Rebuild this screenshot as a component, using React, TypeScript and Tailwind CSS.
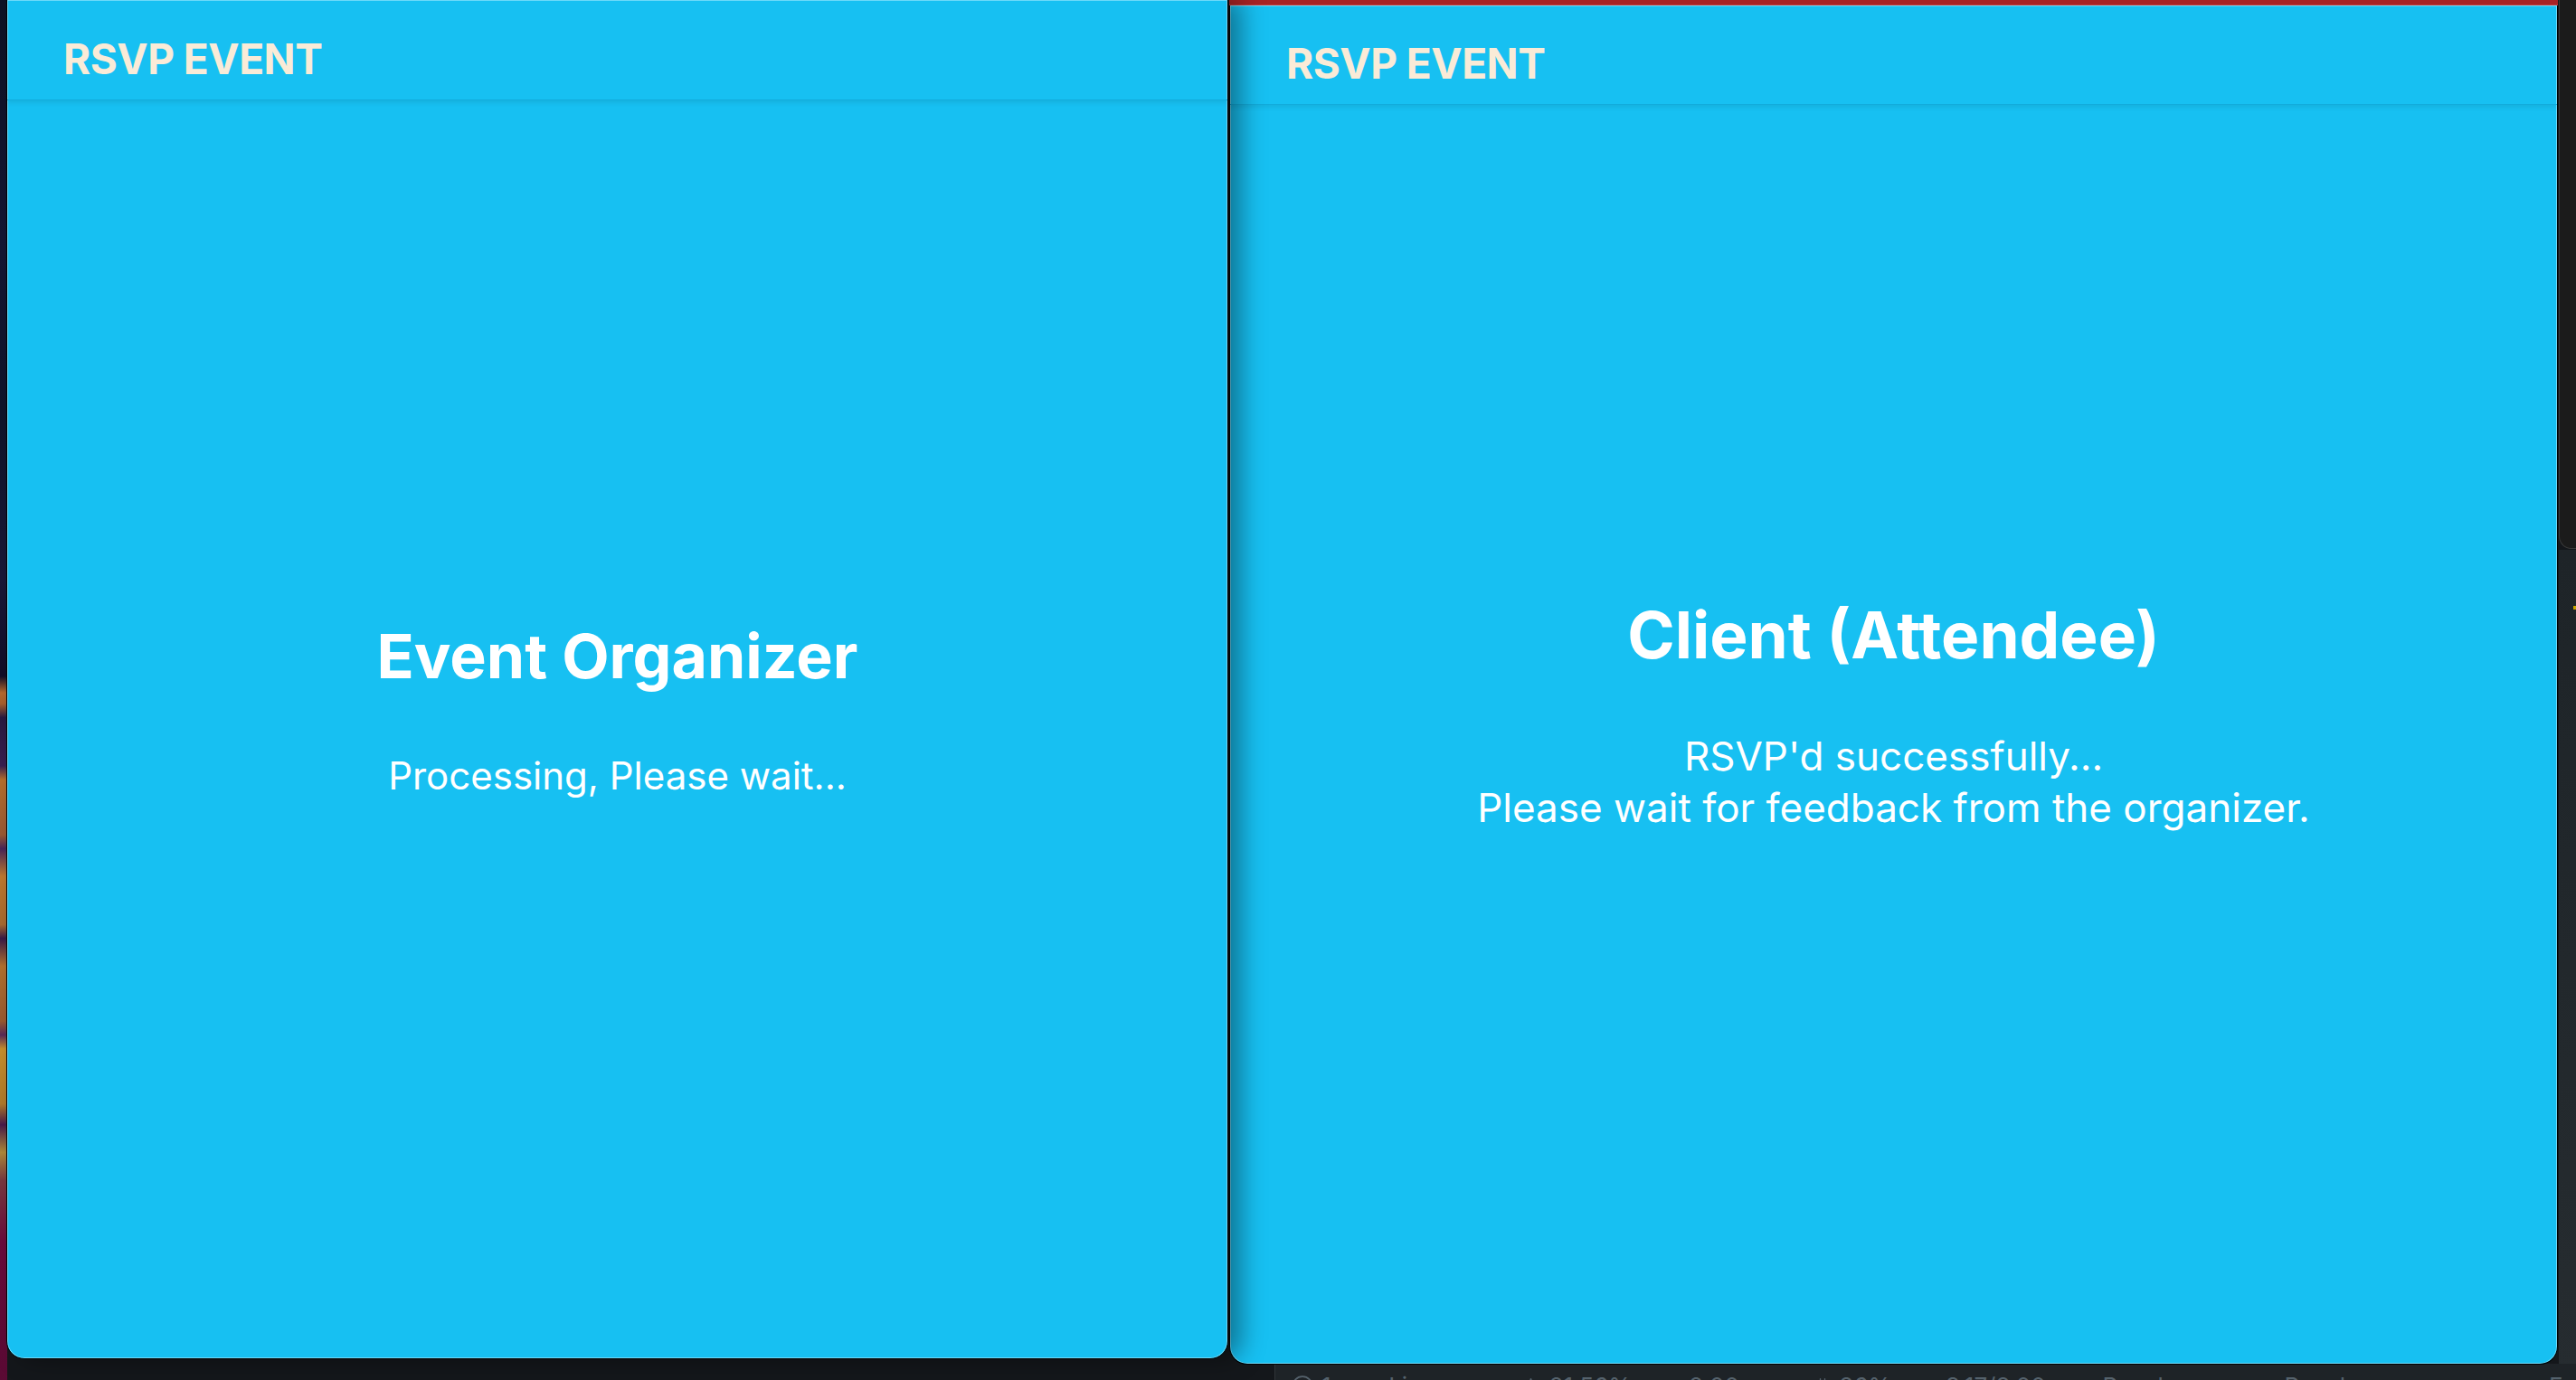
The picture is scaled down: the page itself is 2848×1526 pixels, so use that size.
import { Info, Forward, Activity, Gauge, Plug } from "lucide-react";

const font = { fontFamily: "Inter, 'Noto Sans', sans-serif" };

type WindowProps = {
  heading: string;
  lines: string[];
  headerClass: string;
  headingClass: string;
  textClass: string;
};

const RsvpWindow = ({ heading, lines, headerClass, headingClass, textClass }: WindowProps) => {
  return (
    <div className="flex h-full flex-col">
      <header
        className={`flex shrink-0 items-center border-b border-[#12acdc] pl-[62px] shadow-[0_3px_5px_rgba(0,0,0,0.08)] ${headerClass}`}
      >
        <span className="text-[46px] font-bold leading-none tracking-[-0.5px] text-[#faebd7]">RSVP EVENT</span>
      </header>
      <main className="flex flex-1 flex-col items-center justify-center pb-[36px] text-center text-white">
        <h1 className={`font-bold leading-none ${headingClass}`}>{heading}</h1>
        <div className={`mt-[70px] font-normal leading-[57px] ${textClass}`}>
          {lines.map((line) => (
            <p key={line}>{line}</p>
          ))}
        </div>
      </main>
    </div>
  );
};

const StatusItem = ({ icon, label }: { icon?: React.ReactNode; label: string }) => (
  <div className="flex items-center gap-[8px]">
    {icon}
    <span>{label}</span>
  </div>
);

export default function App() {
  return (
    <div className="relative h-[1526px] w-[2848px] overflow-hidden bg-[#14171b]" style={font}>
      {/* wallpaper sliver on the far left */}
      <div className="absolute left-0 top-0 h-full w-[8px] bg-[linear-gradient(180deg,#0e1224_0%,#151633_18%,#10142a_30%,#1a1838_42%,#120d26_49%,#b86a2e_50.2%,#a8602c_51%,#2a1a40_52%,#3a2050_55.5%,#b8702c_56.5%,#9a5a34_60.5%,#4a2658_61.5%,#c07a30_63.5%,#a86a30_67%,#3a1a48_68%,#b4722e_70%,#9a5a30_74%,#5a2a58_75%,#c8902c_76%,#b07a2a_80%,#4a1a4a_81.5%,#b08a3a_83.5%,#7a3a40_85.5%,#6b0c3c_90%,#5a0a34_100%)]" />

      {/* background window on the right edge */}
      <div className="absolute left-[2829px] top-0 h-[607px] w-[40px] rounded-bl-[14px] border-b border-l border-[#3a3a3a] bg-[#1b1b1b]" />
      <div className="absolute left-[2829px] top-[608px] h-[918px] w-[40px] bg-[linear-gradient(180deg,#1e2428,#262c30)]" />
      <div className="absolute left-[2845px] top-[670px] h-[4px] w-[4px] bg-[#c9a400]" />

      {/* editor status bar peeking under the windows */}
      <div className="absolute left-[1409px] top-[1508px] flex h-[40px] w-[1439px] items-start gap-[34px] border-l border-[#2f3438] bg-[#1e2327] pl-[17px] pt-[9px] text-[26px] leading-[32px] text-[#55626c]">
        <StatusItem icon={<Info size={26} strokeWidth={1.6} />} label="1" />
        <StatusItem icon={<Forward size={24} strokeWidth={1.6} />} label="Live Share" />
        <StatusItem icon={<Activity size={20} strokeWidth={1.6} />} label="21.56%" />
        <StatusItem icon={<Gauge size={24} strokeWidth={1.6} />} label="2.00 GHz" />
        <StatusItem icon={<Plug size={20} strokeWidth={1.6} />} label="86%" />
        <div className="ml-[26px]">
          <StatusItem label="3.17/8.00 GB" />
        </div>
        <StatusItem label="Reach Compile" />
        <StatusItem label="Reach Run" />
        <div className="ml-[140px]">
          <StatusItem label="Fo" />
        </div>
      </div>

      {/* red strip of a window behind the attendee window */}
      <div className="absolute left-[1359px] top-0 h-[6px] w-[1469px] border-b border-[#c43a3a] bg-[#a82325]" />

      {/* attendee window */}
      <div className="absolute left-[1359px] top-[6px] h-[1503px] w-[1469px] overflow-hidden rounded-b-[20px] border border-t-0 border-black bg-[#17c0f2] shadow-[inset_0_0_0_1px_rgba(120,220,250,0.9)]">
        <RsvpWindow
          heading="Client (Attendee)"
          lines={["RSVP'd successfully...", "Please wait for feedback from the organizer."]}
          headerClass="h-[110px] pt-[18px]"
          headingClass="text-[71px]"
          textClass="text-[44px]"
        />
      </div>

      {/* organizer window, in front */}
      <div className="absolute left-[7px] top-[-1px] z-10 h-[1504px] w-[1351px] overflow-hidden rounded-b-[20px] border border-black bg-[#17c0f2] shadow-[inset_0_0_0_1px_rgba(120,220,250,0.9),14px_0_28px_rgba(0,0,0,0.4)]">
        <RsvpWindow
          heading="Event Organizer"
          lines={["Processing, Please wait..."]}
          headerClass="h-[111px] pt-[20px]"
          headingClass="text-[68px]"
          textClass="text-[42px]"
        />
      </div>
    </div>
  );
}
